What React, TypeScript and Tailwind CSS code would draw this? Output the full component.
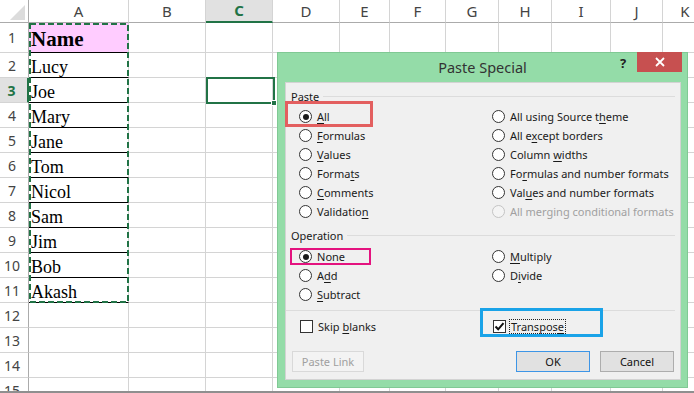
import React from 'react';

const COLS = ['A', 'B', 'C', 'D', 'E', 'F', 'G', 'H', 'I', 'J', 'K'];
const NAMES = ['Name', 'Lucy', 'Joe', 'Mary', 'Jane', 'Tom', 'Nicol', 'Sam', 'Jim', 'Bob', 'Akash'];
const ROWS = Array.from({ length: 15 }, (_, i) => i + 1);

// "&x" marks the access key, like a Windows resource string
function Label({ text, disabled }: { text: string; disabled?: boolean }) {
  const i = text.indexOf('&');
  const color = disabled ? 'text-[#a0a0a0]' : 'text-[#1a1a1a]';
  if (i < 0) return <span className={'whitespace-nowrap ' + color}>{text}</span>;
  return (
    <span className={'whitespace-nowrap ' + color}>
      {text.slice(0, i)}
      <span className="underline underline-offset-2">{text[i + 1]}</span>
      {text.slice(i + 2)}
    </span>
  );
}

function Radio({ text, checked, disabled }: { text: string; checked?: boolean; disabled?: boolean }) {
  return (
    <div className="flex h-[19px] items-center gap-[5px]">
      <span
        className={
          'flex h-[13px] w-[13px] shrink-0 items-center justify-center rounded-full border ' +
          (disabled ? 'border-[#c4c4c4] bg-[#f4f4f4]' : 'border-[#333] bg-white')
        }
      >
        {checked && <span className="h-[6px] w-[6px] rounded-full bg-[#1a1a1a]" />}
      </span>
      <Label text={text} disabled={disabled} />
    </div>
  );
}

function Check({ text, checked, focus }: { text: string; checked?: boolean; focus?: boolean }) {
  return (
    <div className="flex h-[19px] items-center gap-[2px]">
      <span className="flex h-[13px] w-[13px] shrink-0 items-center justify-center border border-[#333] bg-white">
        {checked && (
          <svg width="11" height="11" viewBox="0 0 11 11">
            <path d="M1.5 5.5 L4.2 8.3 L9.5 2.2" fill="none" stroke="#111" strokeWidth="2" />
          </svg>
        )}
      </span>
      <span className={'ml-[1px] px-[1px] py-[1px] ' + (focus ? 'border border-dotted border-[#222]' : 'border border-transparent')}>
        <Label text={text} />
      </span>
    </div>
  );
}

function Section({ title }: { title: string }) {
  return (
    <div className="flex h-[16px] items-center gap-[4px] pl-[5px] pr-[5px]">
      <span className="text-[#1a1a1a]">{title}</span>
      <span className="h-px flex-1 bg-[#dcdcdc]" />
    </div>
  );
}

function PasteSpecial() {
  return (
    <div className="absolute left-[277px] top-[52px] flex h-[336px] w-[411px] flex-col border border-[#80c994] bg-[#94dca8] font-['Noto_Sans',sans-serif] text-[11px] leading-none">
      {/* title bar */}
      <div className="relative flex h-[29px] items-center justify-center">
        <span className="text-[14.5px] text-[#333]">Paste Special</span>
        <span className="absolute left-[342px] top-[4px] text-[13px] font-bold text-[#222]">?</span>
        <div className="absolute left-[359px] top-[-1px] flex h-[20px] w-[45px] items-center justify-center bg-[#c75050]">
          <svg width="10" height="10" viewBox="0 0 10 10">
            <path d="M1 1 L9 9 M9 1 L1 9" stroke="#fff" strokeWidth="1.8" />
          </svg>
        </div>
      </div>

      <div className="relative mb-[7px] ml-[7px] mr-[6px] flex flex-1 flex-col border border-[#d3d3d3] bg-[#f0f0f0] pb-[7px] pt-[5px]">
        <Section title="Paste" />
        <div className="mt-[3px] grid grid-cols-[193px_1fr] pl-[13px]">
          <div className="flex flex-col">
            <Radio text="&All" checked />
            <Radio text="&Formulas" />
            <Radio text="&Values" />
            <Radio text="Forma&ts" />
            <Radio text="&Comments" />
            <Radio text="Validatio&n" />
          </div>
          <div className="flex flex-col">
            <Radio text="All using Source t&heme" />
            <Radio text="All e&xcept borders" />
            <Radio text="Column &widths" />
            <Radio text="Fo&rmulas and number formats" />
            <Radio text="Val&ues and number formats" />
            <Radio text="All merging conditional formats" disabled />
          </div>
        </div>

        <div className="mt-[6px]">
          <Section title="Operation" />
        </div>
        <div className="mt-[4px] grid grid-cols-[193px_1fr] pl-[13px]">
          <div className="flex flex-col">
            <Radio text="N&one" checked />
            <Radio text="A&dd" />
            <Radio text="&Subtract" />
          </div>
          <div className="flex flex-col">
            <Radio text="&Multiply" />
            <Radio text="D&ivide" />
          </div>
        </div>

        <div className="mr-[5px] mt-[6px] h-px bg-[#dcdcdc]" />

        <div className="mt-[6px] grid grid-cols-[193px_1fr] pl-[14px]">
          <Check text="Skip &blanks" />
          <Check text="Transpos&e" checked focus />
        </div>

        <div className="mt-[15px] flex items-center px-[6px]">
          <div className="flex h-[21px] w-[72px] items-center justify-center border border-[#d9d9d9] bg-[#f3f3f3] text-[#a0a0a0]">
            Paste Link
          </div>
          <div className="ml-auto flex h-[21px] w-[74px] items-center justify-center border border-[#3d95e6] bg-[#e1e1e1] text-[#111]">
            OK
          </div>
          <div className="ml-[10px] flex h-[21px] w-[74px] items-center justify-center border border-[#adadad] bg-[#e1e1e1] text-[#111]">
            Cancel
          </div>
        </div>

        {/* annotation boxes */}
        <div className="absolute left-[-1px] top-[18px] h-[26px] w-[88px] border-[3px] border-[#e35f5f]" />
        <div className="absolute left-[4px] top-[165px] h-[17px] w-[81px] border-[2px] border-[#e4137f]" />
        <div className="absolute left-[194px] top-[225px] h-[29px] w-[123px] border-[3px] border-[#1aa3e8]" />
      </div>
    </div>
  );
}

export default function App() {
  return (
    <div className="relative h-[393px] w-[694px] overflow-hidden bg-white">
      <div className="h-[391px] overflow-hidden">
        <div className="grid w-[708px] grid-cols-[29px_100px_77px_67px_67px_50px_56px_53px_53px_59px_52px_45px] grid-rows-[23px_30px_repeat(14,25px)]">
          {/* corner */}
          <div className="flex items-end justify-end border-b border-r border-[#ababab] pb-[2px] pr-[3px]">
            <svg width="15" height="15" viewBox="0 0 15 15">
              <polygon points="15,0 15,15 0,15" fill="#dcdcdc" />
            </svg>
          </div>
          {COLS.map((c) => (
            <div
              key={c}
              className={
                "flex items-center justify-center border-r font-['Noto_Sans',sans-serif] text-[15px] " +
                (c === 'C'
                  ? 'border-b-2 border-r-[#d4d4d4] border-b-[#217346] bg-[#e1e1e1] font-bold text-[#217346]'
                  : 'border-b border-r-[#d4d4d4] border-b-[#ababab] text-[#444]')
              }
            >
              {c}
            </div>
          ))}

          {ROWS.map((r) => (
            <React.Fragment key={r}>
              <div
                className={
                  "flex items-center justify-center border-b border-b-[#d4d4d4] pr-[4px] font-['Noto_Sans',sans-serif] text-[14px] " +
                  (r === 3
                    ? 'border-r-2 border-r-[#217346] bg-[#e1e1e1] font-bold text-[#217346]'
                    : 'border-r border-r-[#ababab] text-[#444]')
                }
              >
                {r}
              </div>
              {COLS.map((c) => {
                const name = c === 'A' ? NAMES[r - 1] : undefined;
                return (
                  <div
                    key={c}
                    className={
                      'flex items-end border-r border-r-[#d4d4d4] border-b ' +
                      (name ? 'border-b-black ' : 'border-b-[#d4d4d4] ') +
                      (r === 1 && c === 'A' ? 'bg-[#ffccff]' : '')
                    }
                  >
                    {name && (
                      <span
                        className={
                          "pl-[2px] font-['Liberation_Serif',serif] leading-none text-black " +
                          (r === 1 ? 'pb-[2px] text-[21px] font-bold' : 'pb-[1px] text-[18px]')
                        }
                      >
                        {name}
                      </span>
                    )}
                  </div>
                );
              })}
            </React.Fragment>
          ))}
        </div>
      </div>
      <div className="h-[2px] bg-[#8f8f8f]" />

      {/* copy marquee around A1:A11 */}
      <svg className="absolute left-[28px] top-[22px]" width="102" height="282" viewBox="0 0 102 282">
        <rect x="2" y="2" width="98" height="278" fill="none" stroke="#217346" strokeWidth="2" strokeDasharray="6 3" />
      </svg>

      {/* active cell C3 */}
      <div className="absolute left-[206px] top-[77px] h-[27px] w-[69px] border-2 border-[#217346]" />
      <div className="absolute left-[271px] top-[100px] h-[6px] w-[6px] border border-white bg-[#217346]" />

      <PasteSpecial />
    </div>
  );
}
